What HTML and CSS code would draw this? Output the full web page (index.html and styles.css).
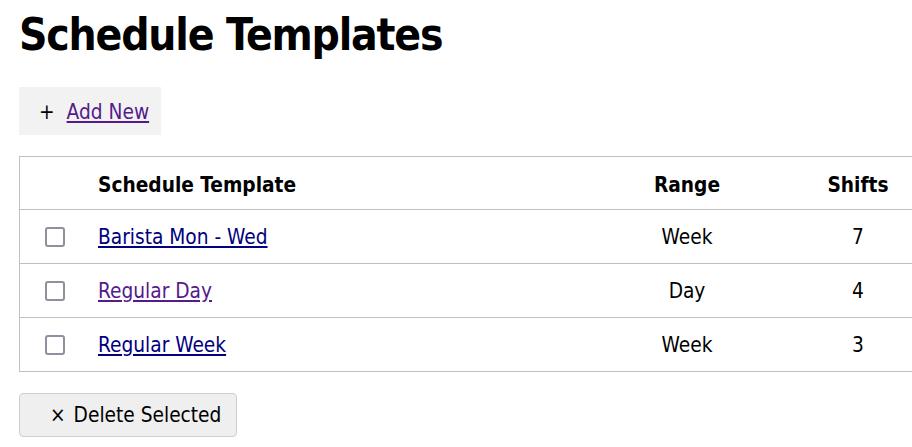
FILE: index.html
```html
<!DOCTYPE html>
<html>
<head>
<meta charset="utf-8">
<link rel="stylesheet" href="styles.css">
</head>
<body>
<main class="page">
  <h1 class="title">Schedule Templates</h1>
  <div class="actions">
    <span class="add-btn"><span class="plus">+</span><a class="visited" href="#">Add New</a></span>
  </div>
  <div class="table-wrap">
    <table class="grid">
      <thead>
        <tr>
          <th class="c-check"></th>
          <th class="c-name">Schedule Template</th>
          <th class="c-range">Range</th>
          <th class="c-shifts">Shifts</th>
        </tr>
      </thead>
      <tbody>
        <tr>
          <td class="c-check"><span class="box"></span></td>
          <td class="c-name"><a class="link" href="#">Barista Mon - Wed</a></td>
          <td class="c-range">Week</td>
          <td class="c-shifts">7</td>
        </tr>
        <tr>
          <td class="c-check"><span class="box"></span></td>
          <td class="c-name"><a class="visited" href="#">Regular Day</a></td>
          <td class="c-range">Day</td>
          <td class="c-shifts">4</td>
        </tr>
        <tr>
          <td class="c-check"><span class="box"></span></td>
          <td class="c-name"><a class="link" href="#">Regular Week</a></td>
          <td class="c-range">Week</td>
          <td class="c-shifts">3</td>
        </tr>
      </tbody>
    </table>
  </div>
  <button class="del-btn" type="button"><span class="times">×</span>Delete Selected</button>
</main>
</body>
</html>
```
FILE: styles.css
```css
html, body {
  margin: 0;
  padding: 0;
  background: #fff;
  overflow: hidden;
}
body {
  font-family: "DejaVu Sans Condensed", "DejaVu Sans", sans-serif;
  font-size: 20.7px;
  color: #000;
}
.page {
  padding: 0 0 0 19px;
}
.title {
  font-size: 44px;
  font-weight: bold;
  margin: 7px 0 0 0;
  line-height: 56px;
  letter-spacing: -1.2px;
}
.actions {
  margin-top: 24px;
  display: flex;
}
.add-btn {
  display: flex;
  align-items: center;
  height: 48px;
  padding: 2px 12px 0 20px;
  background: #f2f2f2;
  box-sizing: border-box;
}
.plus {
  margin-right: 12px;
}
a.visited {
  color: #551a8b;
}
a.link {
  color: #000080;
}
.table-wrap {
  overflow: hidden;
  margin-top: 21px;
}
.grid {
  width: 926px;
  border-collapse: collapse;
  border: 1px solid #c0c0c0;
}
.grid th, .grid td {
  height: 53px;
  padding: 0;
  border-bottom: 1px solid #c0c0c0;
  vertical-align: middle;
}
.grid th {
  height: 49px;
  padding-top: 3px;
  font-weight: bold;
}
.c-check {
  width: 78px;
}
.c-check .box {
  display: block;
  width: 16px;
  height: 16px;
  border: 2.5px solid #8f8f9d;
  border-radius: 3px;
  margin-left: 25px;
}
.c-name {
  text-align: left;
}
.c-range {
  width: 170px;
  text-align: center;
}
.c-shifts {
  width: 172px;
  text-align: center;
}
.del-btn {
  margin-top: 21px;
  display: flex;
  align-items: center;
  height: 44px;
  padding: 0 15px 0 30px;
  font-family: inherit;
  font-size: 20.7px;
  color: #000;
  background: #efefef;
  border: 1px solid #cfcfcf;
  border-radius: 4px;
}
.times {
  margin-right: 8px;
}
```
